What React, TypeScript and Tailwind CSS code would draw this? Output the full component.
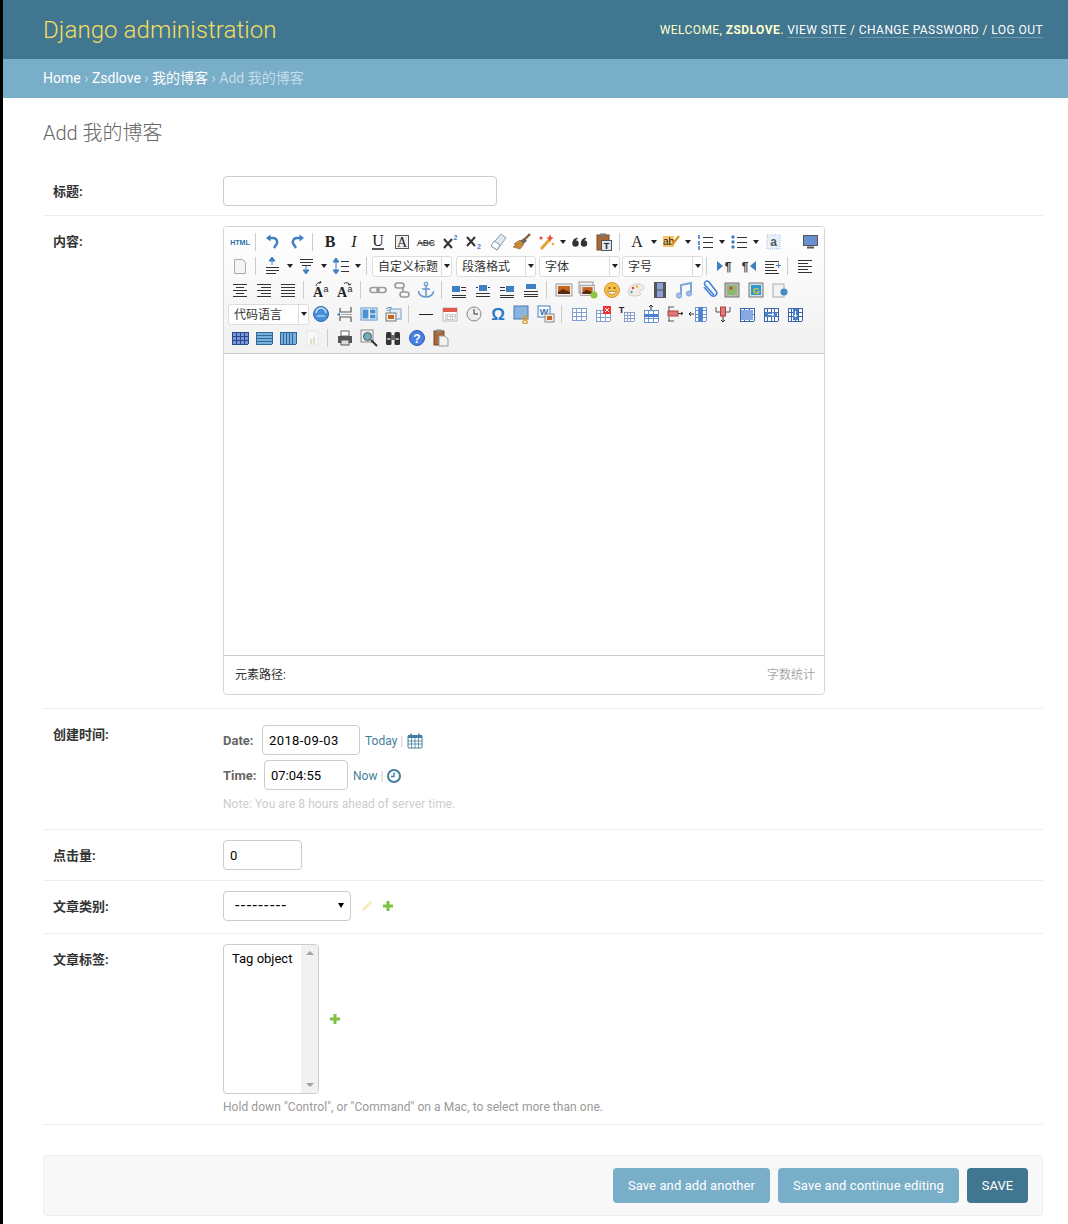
import React from "react";

const B = "#3f7fc4";
const D = "#333";

const Grid = ({ c = "#6f94c8", x = 3, y = 4, w = 14, h = 12, cols = 3, rows = 3, bg = "#fff" }: any) => {
  const l = [];
  for (let i = 0; i <= cols; i++) l.push(<path key={"c" + i} d={`M${x + (w * i) / cols} ${y}v${h}`} stroke={c} />);
  for (let i = 0; i <= rows; i++) l.push(<path key={"r" + i} d={`M${x} ${y + (h * i) / rows}h${w}`} stroke={c} />);
  return (
    <g shapeRendering="crispEdges">
      <rect x={x} y={y} width={w} height={h} fill={bg} />
      {l}
    </g>
  );
};

const Lines = ({ rows }: { rows: number[][] }) => (
  <g shapeRendering="crispEdges">
    {rows.map((r, i) => (
      <path key={i} d={`M${r[0]} ${r[2]}H${r[1]}`} stroke={D} strokeWidth="1" />
    ))}
  </g>
);

const T = ({ x = 10, y = 15, s = 15, f = "'Liberation Serif',serif", w = "700", c = "#222", st = "normal", children }: any) => (
  <text x={x} y={y} textAnchor="middle" fontFamily={f} fontSize={s} fontWeight={w} fill={c} fontStyle={st}>
    {children}
  </text>
);

const layout = (a: number) => (
  <>
    <Lines rows={[[3, 17, 15], [3, 17, 17]]} />
    <rect x={a} y="6" width="8" height="6" fill={B} />
    {a === 3 && <Lines rows={[[12, 17, 7], [12, 17, 10]]} />}
    {a === 9 && <Lines rows={[[3, 8, 7], [3, 8, 10]]} />}
  </>
);

const picture = (
  <>
    <rect x="2" y="4" width="16" height="12" fill="#eee" stroke="#999" />
    <rect x="4" y="6" width="12" height="8" fill="#c8641e" />
    <path d="M4 12l5-3 7 3v2H4z" fill="#5a2a10" />
  </>
);

const icons: Record<string, React.ReactNode> = {
  html: <T s={7} y={13} f="'Liberation Sans',sans-serif" c="#2e6da4">HTML</T>,
  undo: (
    <>
      <path d="M7 6h3a4 4 0 0 1 3 6.800L11 16" fill="none" stroke={B} strokeWidth="2.400" />
      <path d="M3 6l4.500-3.500v7z" fill={B} />
    </>
  ),
  redo: (
    <>
      <path d="M13 6h-3a4 4 0 0 0-3 6.800L9 16" fill="none" stroke={B} strokeWidth="2.400" />
      <path d="M17 6l-4.500-3.500v7z" fill={B} />
    </>
  ),
  bold: <T s={16}>B</T>,
  italic: <T s={16} st="italic" w="400">I</T>,
  under: (
    <>
      <T y={14} s={16} w="400">U</T>
      <path d="M4 17h12" stroke="#222" strokeWidth="1.400" />
    </>
  ),
  boxa: (
    <>
      <rect x="3.500" y="3.500" width="13" height="13" fill="#eee" stroke="#555" />
      <T y={15} s={14} w="400">A</T>
    </>
  ),
  strike: (
    <>
      <T s={9} y={14} w="400" f="'Liberation Sans',sans-serif">ABC</T>
      <path d="M2 11h16" stroke="#222" />
    </>
  ),
  sup: (
    <>
      <path d="M4 7l8 9M12 7l-8 9" stroke={D} strokeWidth="2" />
      <T x={15.500} y={8} s={7} f="'Liberation Sans',sans-serif" c={B}>2</T>
    </>
  ),
  sub: (
    <>
      <path d="M3 5l8 9M11 5l-8 9" stroke={D} strokeWidth="2" />
      <T x={15} y={17} s={7} f="'Liberation Sans',sans-serif" c={B}>2</T>
    </>
  ),
  eraser: (
    <>
      <path d="M13 2l5 4-9 12-6-4z" fill="#dfe7f0" stroke="#8a9bb0" />
      <path d="M6 9l6 4-3 5-6-4z" fill="#fff" stroke="#8a9bb0" />
    </>
  ),
  brush: (
    <>
      <path d="M18 2l-6 6" stroke="#8a5a2b" strokeWidth="2.400" />
      <path d="M12 6l3 3-4 3-3-3z" fill="#666" />
      <path d="M8 8l4 4-4 5-7-2 3-2-2-1z" fill="#c48a3a" stroke="#8a5a2b" strokeWidth=".6" />
    </>
  ),
  wand: (
    <>
      <path d="M15 6L5 17" stroke="#e3a63a" strokeWidth="3" />
      <path d="M14 2l1 3 3 1-3 1-1 3-1-3-3-1 3-1z" fill="#e34a3a" />
      <circle cx="5" cy="6" r="1.600" fill="#e34a3a" />
      <circle cx="17" cy="12" r="1.200" fill="#f0a030" />
    </>
  ),
  quote: (
    <>
      <circle cx="5.500" cy="11.500" r="3.200" fill="#333" />
      <path d="M2.500 11c0-3 2-5 5-5.500v1.500c-1.500.5-2.300 2-2 4z" fill="#333" />
      <circle cx="14" cy="11.500" r="3.200" fill="#333" />
      <path d="M11 11c0-3 2-5 5-5.500v1.500c-1.500.5-2.300 2-2 4z" fill="#333" />
    </>
  ),
  paste: (
    <>
      <rect x="3" y="3" width="12" height="15" fill="#a8683a" stroke="#7a4a26" />
      <rect x="6" y="1.500" width="6" height="3" fill="#777" />
      <rect x="7.500" y="8.500" width="10" height="10" fill="#dfe8f2" stroke="#555" />
      <T x={12.500} y={17} s={9} f="'Liberation Sans',sans-serif">T</T>
    </>
  ),
  fontA: <T s={16} y={15} w="400">A</T>,
  hilite: (
    <>
      <rect x="2" y="4" width="11" height="11" fill="#f8c66a" />
      <T x={7.500} y={13} s={10} f="'Liberation Sans',sans-serif" w="400">ab</T>
      <path d="M18 4l-7 9" stroke="#d9982a" strokeWidth="2.400" />
    </>
  ),
  ol: (
    <>
      <path d="M4 3v4M4 9v4M4 14v4" stroke={B} strokeWidth="1.600" />
      <Lines rows={[[8, 18, 5], [8, 18, 10], [8, 18, 15]]} />
    </>
  ),
  ul: (
    <>
      <circle cx="4" cy="5" r="1.700" fill={B} />
      <circle cx="4" cy="10" r="1.700" fill={B} />
      <circle cx="4" cy="15" r="1.700" fill={B} />
      <Lines rows={[[8, 18, 5], [8, 18, 10], [8, 18, 15]]} />
    </>
  ),
  anchorA: (
    <>
      <rect x="4" y="3" width="13" height="14" fill="#e8f0fa" stroke="#a8c4e8" strokeDasharray="1 1" />
      <T x={10.500} y={14} s={12} f="'Liberation Sans',sans-serif" c="#555">a</T>
    </>
  ),
  monitor: (
    <>
      <rect x="3.500" y="3.500" width="14" height="10" fill="#6a8fd0" stroke="#555" />
      <path d="M7 15.500h7" stroke="#555" strokeWidth="2" />
    </>
  ),
  doc: <path d="M4.500 3.500h8l3 3v11h-11z" fill="#f4f4f4" stroke="#aab" />,
  rowUp: (
    <>
      <path d="M9 1l3 4H6zM9 4v5" fill={B} stroke={B} />
      <Lines rows={[[3, 16, 11], [3, 16, 14], [3, 13, 17]]} />
    </>
  ),
  rowDown: (
    <>
      <Lines rows={[[3, 16, 3], [3, 16, 6], [5, 14, 9]]} />
      <path d="M9 18l3-4H6zM9 10v5" fill={B} stroke={B} />
    </>
  ),
  lineH: (
    <>
      <path d="M5 2l3 4H2zM5 18l3-4H2zM5 5v10" fill={B} stroke={B} />
      <Lines rows={[[10, 18, 5], [10, 18, 10], [10, 18, 15]]} />
    </>
  ),
  select: null,
  ltr: (
    <>
      <path d="M3 5l6 5-6 5z" fill={B} />
      <T x={14} y={15} s={12} f="'Liberation Sans',sans-serif" c="#333">¶</T>
    </>
  ),
  rtl: (
    <>
      <T x={7} y={15} s={12} f="'Liberation Sans',sans-serif" c="#333">¶</T>
      <path d="M18 5l-6 5 6 5z" fill={B} />
    </>
  ),
  indent: (
    <>
      <Lines rows={[[3, 17, 5], [3, 12, 8], [3, 12, 11], [3, 15, 14], [3, 17, 17]]} />
      <path d="M14 9.500h5M16.500 7v5" stroke={B} />
    </>
  ),
  jl: <Lines rows={[[3, 17, 4], [3, 13, 7], [3, 17, 10], [3, 13, 13], [3, 17, 16]]} />,
  jc: <Lines rows={[[3, 17, 4], [6, 14, 7], [3, 17, 10], [6, 14, 13], [3, 17, 16]]} />,
  jr: <Lines rows={[[3, 17, 4], [7, 17, 7], [3, 17, 10], [7, 17, 13], [3, 17, 16]]} />,
  jj: <Lines rows={[[3, 17, 4], [3, 17, 7], [3, 17, 10], [3, 17, 13], [3, 17, 16]]} />,
  capUp: (
    <>
      <T x={7} y={17} s={14} w="700">A</T>
      <T x={15} y={12} s={9} w="400" f="'Liberation Sans',sans-serif">a</T>
      <path d="M5 6a4 4 0 0 1 5-3.500l-1-1.500M10 2.500l-2 1" fill="none" stroke={D} />
    </>
  ),
  capDown: (
    <>
      <T x={7} y={17} s={14} w="700">A</T>
      <T x={15} y={12} s={9} w="400" f="'Liberation Sans',sans-serif">a</T>
      <path d="M9 3.500a4 4 0 0 1 6 1.500l1-1.500M15 5l-2-.5" fill="none" stroke={D} />
    </>
  ),
  link: (
    <>
      <rect x="2" y="7.500" width="9" height="5" rx="2.500" fill="none" stroke="#999" strokeWidth="1.600" />
      <rect x="9" y="7.500" width="9" height="5" rx="2.500" fill="none" stroke="#999" strokeWidth="1.600" />
    </>
  ),
  unlink: (
    <>
      <rect x="3" y="3" width="9" height="5" rx="2.500" fill="none" stroke="#999" strokeWidth="1.600" />
      <rect x="8" y="12" width="9" height="5" rx="2.500" fill="none" stroke="#999" strokeWidth="1.600" />
      <path d="M11 8v4" stroke="#999" strokeWidth="1.600" />
    </>
  ),
  anchor: (
    <>
      <circle cx="10" cy="4" r="1.700" fill="none" stroke="#6a9ad0" strokeWidth="1.300" />
      <path d="M10 6v11M6 9h8M2.500 11c0 4 4 6 7.500 6s7.500-2 7.500-6" fill="none" stroke="#6a9ad0" strokeWidth="1.600" />
    </>
  ),
  lay1: layout(3),
  lay2: (
    <>
      <rect x="6" y="5" width="8" height="6" fill={B} />
      <Lines rows={[[3, 5, 7], [15, 17, 7], [3, 17, 13], [3, 17, 16]]} />
    </>
  ),
  lay3: layout(9),
  lay4: (
    <>
      <rect x="5" y="4" width="10" height="5" fill={B} />
      <Lines rows={[[3, 17, 11], [3, 17, 14], [3, 17, 16]]} />
    </>
  ),
  img: picture,
  imgs: (
    <>
      <rect x="1" y="2" width="14" height="11" fill="#eee" stroke="#999" />
      <g transform="translate(1 2) scale(.85)">{picture}</g>
      <circle cx="16" cy="15" r="3.500" fill="#8cc63f" />
    </>
  ),
  emoji: (
    <>
      <circle cx="10" cy="10" r="7.500" fill="#f5c04a" stroke="#d9952a" />
      <circle cx="7.500" cy="8" r="1" fill="#7a4a10" />
      <circle cx="12.500" cy="8" r="1" fill="#7a4a10" />
      <path d="M5.500 11.500c1.500 3.500 7.500 3.500 9 0z" fill="#fff" stroke="#a05a10" strokeWidth=".6" />
    </>
  ),
  palette: (
    <>
      <path d="M2 12c0-5 6-9 12-8 5 1 5 5 2 6-3 0-3 3-1 4-2 3-13 3-13-2z" fill="#f0eee6" stroke="#ccc" />
      <circle cx="7" cy="8" r="1.200" fill="#e35" />
      <circle cx="11" cy="6.500" r="1.200" fill="#e3b030" />
      <circle cx="5.500" cy="12" r="1.200" fill="#5a9ad0" />
    </>
  ),
  film: (
    <>
      <rect x="4" y="2" width="12" height="16" fill="#555" />
      <rect x="7" y="3" width="6" height="6.500" fill="#8aa0d8" />
      <rect x="7" y="10.500" width="6" height="6.500" fill="#8aa0d8" />
    </>
  ),
  music: (
    <>
      <path d="M7 15V5l10-2v10" fill="none" stroke="#7ba6d8" strokeWidth="2" />
      <circle cx="5" cy="15.500" r="2.600" fill="#9cc0e8" stroke="#7ba6d8" />
      <circle cx="15" cy="13.500" r="2.600" fill="#9cc0e8" stroke="#7ba6d8" />
    </>
  ),
  clip: <path d="M16 15L7 5a2.400 2.400 0 0 1 4-3l7 9a3 3 0 0 1-5 4L6 7" fill="none" stroke="#3f7fd4" strokeWidth="1.500" />,
  map: (
    <>
      <rect x="3" y="3" width="14" height="14" fill="#bbb" stroke="#777" />
      <rect x="5" y="5" width="10" height="10" fill="#8cb870" />
      <circle cx="9" cy="8" r="1.600" fill="#d33" />
    </>
  ),
  gmap: (
    <>
      <rect x="3" y="3" width="14" height="14" fill="#ddd" stroke="#777" />
      <rect x="5" y="5" width="10" height="10" fill="#2a9ad0" />
      <T y={14} s={9} f="'Liberation Sans',sans-serif" c="#e3c030">G</T>
    </>
  ),
  iframe: (
    <>
      <rect x="3" y="4" width="11" height="13" fill="#f2f2f2" stroke="#aaa" />
      <circle cx="14" cy="12" r="3.600" fill="#4a8ac0" />
    </>
  ),
  lang: (
    <>
      <circle cx="10" cy="10" r="7.500" fill="#4a90d9" stroke="#2a6ab0" />
      <path d="M5 9a5 5 0 0 1 10 0" fill="none" stroke="#cfe4fa" strokeWidth="1.400" />
      <path d="M6 12h8" stroke="#cfe4fa" />
    </>
  ),
  pagebreak: (
    <>
      <path d="M5 4v4h11V3M5 17v-4h11v5" fill="none" stroke="#555" strokeWidth="1.200" />
      <path d="M2 10.500l3-2v4z" fill={B} />
      <path d="M6 10.500h11" stroke="#aaa" />
    </>
  ),
  template: (
    <>
      <rect x="2" y="4" width="16" height="12" fill="#fff" stroke="#5a8fc4" />
      <rect x="3.500" y="5.500" width="6" height="9" fill="#4a90d0" />
      <rect x="11" y="5.500" width="5.500" height="4" fill="#4a90d0" />
      <rect x="11" y="10.500" width="5.500" height="4" fill="#4a90d0" />
    </>
  ),
  bg: (
    <>
      <rect x="7" y="5" width="11" height="10" fill="#e2ecf8" stroke="#7a9cc8" />
      <rect x="3" y="9" width="10" height="8" fill="#eee" stroke="#777" />
      <rect x="5" y="11" width="6" height="4" fill="#c8641e" />
      <path d="M3 5a5 5 0 0 1 6-1M4 7a3 3 0 0 1 3-1" fill="none" stroke="#4a8ac0" />
    </>
  ),
  hr: <path d="M3 10.500h14" stroke="#222" strokeWidth="1" />,
  date: (
    <>
      <rect x="3" y="4" width="14" height="13" fill="#fff" stroke="#bbb" />
      <rect x="3" y="4" width="14" height="4" fill="#e25a4a" />
      <Grid c="#ccc" x={5} y={10} w={10} h={5} cols={4} rows={2} />
    </>
  ),
  time: (
    <>
      <circle cx="10" cy="10" r="7" fill="#eee" stroke="#888" />
      <path d="M10 5v5h4" fill="none" stroke="#333" />
    </>
  ),
  omega: <T s={17} y={16} w="700" c="#2e78c8" f="'Liberation Sans',sans-serif">Ω</T>,
  wiki: (
    <>
      <rect x="2" y="2" width="14" height="13" fill="#8ab4e0" stroke="#4a7ab0" />
      <path d="M13 12a2 2 0 1 0 .1 0M13 16a2 2 0 1 0 .1 0" fill="none" stroke="#d9a030" strokeWidth="1.600" />
    </>
  ),
  word: (
    <>
      <rect x="2" y="2" width="12" height="11" fill="#fff" stroke="#3f7fc4" />
      <T x={8} y={11} s={9} c="#2e6ab0" f="'Liberation Sans',sans-serif">W</T>
      <rect x="9" y="10" width="9" height="8" fill="#eee" stroke="#888" />
      <rect x="11" y="12" width="5" height="4" fill="#c8641e" />
    </>
  ),
  table: <Grid c="#7f9fd0" />,
  tableDel: (
    <>
      <Grid c="#7f9fd0" y={6} h={11} />
      <rect x="10" y="2" width="8" height="8" fill="#e33" />
      <path d="M12 4l4 4M16 4l-4 4" stroke="#fff" />
    </>
  ),
  titleCol: (
    <>
      <T x={4.500} y={9} s={9} f="'Liberation Sans',sans-serif" c="#222">T</T>
      <Grid c="#8aa0c8" x={7} y={8} w={10} h={9} />
    </>
  ),
  rowIns: (
    <>
      <Grid c="#6a94d0" y={6} h={12} />
      <rect x="3" y="10" width="14" height="3" fill="#4a80d0" />
      <path d="M10 1v5M8 3l2-2 2 2" fill="none" stroke="#333" />
    </>
  ),
  colDel: (
    <>
      <path d="M3 3h6M3 17h6M4 3v4M4 13v4" stroke="#555" fill="none" />
      <rect x="3" y="7" width="10" height="5" fill="#e07878" stroke="#b04040" />
      <path d="M13 9.500h5M16 8l2 1.500-2 1.500" fill="none" stroke="#333" />
    </>
  ),
  colIns: (
    <>
      <Grid c="#6a94d0" x={6} y={3} w={11} h={14} cols={3} rows={4} />
      <rect x="10" y="3" width="3.500" height="14" fill="#4a80d0" />
      <path d="M0 10h5M2 8l-2 2 2 2" fill="none" stroke="#333" />
    </>
  ),
  rowDel: (
    <>
      <path d="M3 3v5h14V3" stroke="#555" fill="none" />
      <rect x="7.500" y="3" width="5" height="9" fill="#e07878" stroke="#b04040" />
      <path d="M10 12v6M8 16l2 2 2-2" fill="none" stroke="#333" />
    </>
  ),
  merge: (
    <>
      <Grid c="#3a64a8" cols={3} rows={2} y={4} h={13} />
      <rect x="4" y="6" width="12" height="10" fill="#8aa8e0" />
    </>
  ),
  mergeR: (
    <>
      <Grid c="#3a64a8" cols={4} rows={3} y={4} h={13} />
      <rect x="4" y="8" width="12" height="5" fill="#4a80c8" />
      <path d="M7 10.500h6M11 9l2 1.500-2 1.500" fill="none" stroke="#fff" />
    </>
  ),
  mergeD: (
    <>
      <Grid c="#3a64a8" cols={4} rows={3} y={4} h={13} />
      <rect x="8" y="5" width="5" height="11" fill="#4a80c8" />
      <path d="M10.500 7v6M9 11l1.500 2 1.500-2" fill="none" stroke="#fff" />
    </>
  ),
  t1: <Grid c="#2a4a90" cols={4} rows={3} bg="#7a96d8" x={2} w={16} h={12} />,
  t2: <Grid c="#2a6aa0" cols={1} rows={4} bg="#7ab0d8" x={2} w={16} h={12} />,
  t3: <Grid c="#2a64a0" cols={5} rows={1} bg="#7ab0d8" x={2} w={16} h={12} />,
  chart: (
    <>
      <path d="M5 3h8l3 3v11H5z" fill="#f8f8f8" stroke="#e6e6e6" />
      <rect x="8" y="11" width="2" height="5" fill="#e6dcc0" />
      <rect x="11" y="9" width="2" height="7" fill="#d8e4c8" />
    </>
  ),
  print: (
    <>
      <rect x="6" y="3" width="8" height="5" fill="#fff" stroke="#666" />
      <rect x="3" y="8" width="14" height="7" fill="#555" />
      <rect x="6" y="12" width="8" height="5" fill="#ddd" stroke="#555" />
    </>
  ),
  preview: (
    <>
      <rect x="2" y="2" width="12" height="12" fill="#eee" stroke="#888" />
      <circle cx="8.500" cy="8.500" r="4" fill="#6ab0b8" stroke="#555" />
      <path d="M12 12l6 6" stroke="#333" strokeWidth="2" />
    </>
  ),
  find: (
    <>
      <rect x="3" y="4" width="5.500" height="13" rx="1.500" fill="#333" />
      <rect x="11.500" y="4" width="5.500" height="13" rx="1.500" fill="#333" />
      <rect x="8" y="7" width="4" height="5" fill="#666" />
      <rect x="4" y="10" width="3.500" height="2" fill="#aaa" />
      <rect x="12.500" y="10" width="3.500" height="2" fill="#aaa" />
    </>
  ),
  help: (
    <>
      <circle cx="10" cy="10" r="7.500" fill="#4a80e0" stroke="#2a5ab8" />
      <T y={14.500} s={12} c="#fff" f="'Liberation Sans',sans-serif">?</T>
    </>
  ),
  draft: (
    <>
      <rect x="3" y="3" width="10" height="14" fill="#a8683a" stroke="#7a4a26" />
      <rect x="5.500" y="1.500" width="5" height="3" fill="#888" />
      <path d="M8 8h6l3 3v7H8z" fill="#f2f2f2" stroke="#999" />
    </>
  ),
};

const Caret = () => (
  <span className="w-0 h-0 border-x-[3.5px] border-x-transparent border-t-[4px] border-t-[#222]" />
);

const Tool = ({ name }: { name: string }) => (
  <span className="flex w-[24px] h-[24px] items-center justify-center">
    <svg width="20" height="20" viewBox="0 0 20 20">
      {icons[name]}
    </svg>
  </span>
);

const Item = ({ item }: { item: string }) => {
  if (item === "|") {
    return (
      <span className="w-[9px] h-[24px] flex items-center pl-[3px]">
        <span className="w-px h-[18px] bg-[#ccc]" />
      </span>
    );
  }
  if (item === "_") return <span className="w-[13px]" />;
  if (item.startsWith("sel:")) {
    const [, label, w, ml] = item.split(":");
    return (
      <span
        className="flex h-[21px] border border-[#ddd] rounded-[3px] bg-white text-[12px] text-[#333]"
        style={{ width: Number(w), marginLeft: Number(ml) }}
      >
        <span className="flex-1 pl-[5px] leading-[20px] truncate">{label}</span>
        <span className="w-[10px] flex items-center justify-center border-l border-[#ddd]">
          <Caret />
        </span>
      </span>
    );
  }
  if (item.endsWith("+")) {
    return (
      <span className="flex w-[34px] items-center">
        <Tool name={item.slice(0, -1)} />
        <span className="w-[10px] flex justify-center">
          <Caret />
        </span>
      </span>
    );
  }
  return <Tool name={item} />;
};

const toolbar = [
  ["html", "|", "undo", "redo", "|", "bold", "italic", "under", "boxa", "strike", "sup", "sub", "eraser", "brush", "wand+", "quote", "paste", "|", "fontA+", "hilite+", "ol+", "ul+", "anchorA", "_", "monitor"],
  ["doc", "|", "rowUp+", "rowDown+", "lineH+", "|", "sel:自定义标题:80:0", "sel:段落格式:80:4", "sel:字体:81:3", "sel:字号:81:2", "|", "ltr", "rtl", "indent", "|", "jl"],
  ["jc", "jr", "jj", "|", "capUp", "capDown", "|", "link", "unlink", "anchor", "|", "lay1", "lay2", "lay3", "lay4", "|", "img", "imgs", "emoji", "palette", "film", "music", "clip", "map", "gmap", "iframe"],
  ["sel:代码语言:81:0", "lang", "pagebreak", "template", "bg", "|", "hr", "date", "time", "omega", "wiki", "word", "|", "table", "tableDel", "titleCol", "rowIns", "colDel", "colIns", "rowDel", "merge", "mergeR", "mergeD"],
  ["t1", "t2", "t3", "chart", "|", "print", "preview", "find", "help", "draft"],
];

const Row = ({ label, className, children }: { label: string; className: string; children: React.ReactNode }) => (
  <div className={`flex pl-[10px] border-b border-[#eee] ${className}`}>
    <label className="w-[170px] h-[30px] text-[13px] font-bold text-[#333] leading-[32px] shrink-0">{label}:</label>
    <div>{children}</div>
  </div>
);

const inputCls = "block h-[30px] border border-[#ccc] rounded-[4px] px-[6px] text-[13px] text-black bg-white";

const Plus = () => (
  <svg width="12" height="12" viewBox="0 0 12 12">
    <path d="M4.500 1h3v3.500h3.500v3H7.500V11h-3V7.500H1v-3h3.500z" fill="#7fc241" />
  </svg>
);

export default function App() {
  return (
    <div className="bg-black pl-[3px] min-h-[1224px] [font-family:Roboto,'Noto_Sans_CJK_SC',sans-serif]">
      <div className="bg-white h-[1224px] overflow-hidden">
        <header className="flex items-center justify-between h-[59px] bg-[#417690] pl-[40px] pr-[25px]">
          <h1 className="text-[24px] font-light text-[#f5dd5d] tracking-[0.1px]">Django administration</h1>
          <div className="text-[12px] tracking-[0.43px] uppercase text-[#ffc]">
            Welcome, <strong>zsdlove</strong>. <a className="text-white border-b border-[rgba(255,255,255,0.25)]">View site</a>
            {" / "}
            <a className="text-white border-b border-[rgba(255,255,255,0.25)]">Change password</a>
            {" / "}
            <a className="text-white border-b border-[rgba(255,255,255,0.25)]">Log out</a>
          </div>
        </header>
        <div className="h-[39px] bg-[#79aec8] pl-[40px] flex items-center text-[14px] text-[#c4dce8]">
          <a className="text-white">Home</a>
          <span className="mx-[3.5px]">›</span>
          <a className="text-white">Zsdlove</a>
          <span className="mx-[3.5px]">›</span>
          <a className="text-white">我的博客</a>
          <span className="mx-[3.5px]">›</span>
          <span>Add 我的博客</span>
        </div>
        <main className="pl-[40px] pr-[25px] pt-[21px]">
          <h2 className="text-[20px] font-light text-[#666] leading-[28px] mb-[19px]">Add 我的博客</h2>

          <Row label="标题" className="pt-[10px] pb-[9px]">
            <input className={`${inputCls} w-[274px]`} />
          </Row>

          <Row label="内容" className="pt-[10px] pb-[13px]">
            <div className="w-[602px] border border-[#d4d4d4] rounded-[4px] overflow-hidden">
              <div className="h-[127px] pt-[3px] pl-[4px] bg-gradient-to-b from-white to-[#f1f1f1] border-b border-[#ccc] shadow-[0_2px_4px_rgba(0,0,0,0.15)]">
                {toolbar.map((items, i) => (
                  <div key={i} className="flex h-[24px] items-center">
                    {items.map((item, j) => (
                      <Item key={j} item={item} />
                    ))}
                  </div>
                ))}
              </div>
              <div className="h-[301px] bg-white" />
              <div className="h-[39px] border-t border-[#ccc] flex items-center justify-between pl-[11px] pr-[9px] text-[12px]">
                <span className="text-[#333]">元素路径:</span>
                <span className="text-[#aaa]">字数统计</span>
              </div>
            </div>
          </Row>

          <Row label="创建时间" className="pt-[10px] pb-[17px]">
            <div className="pt-[6px]">
              <div className="flex items-center h-[30px] text-[12px]">
                <span className="w-[39px] pt-[2px] text-[13px] font-bold text-[#666]">Date:</span>
                <input className={`${inputCls} w-[98px] tracking-[0.4px]`} defaultValue="2018-09-03" />
                <a className="ml-[5px] pt-[2px] text-[#447e9b]">Today</a>
                <span className="ml-[3px] pt-[2px] text-[#ccc]">|</span>
                <svg className="ml-[4px] mt-[2px]" width="16" height="16" viewBox="0 0 16 16">
                  <rect x="1" y="2.500" width="14" height="12.500" rx="1" fill="#fff" stroke="#447e9b" />
                  <rect x="1" y="2" width="14" height="3" fill="#447e9b" />
                  <path d="M4 .5v3M12 .5v3" stroke="#447e9b" strokeWidth="1.600" />
                  <path d="M1 8h14M1 11h14M4.500 5v10M8 5v10M11.500 5v10" stroke="#447e9b" strokeWidth=".8" />
                </svg>
              </div>
              <div className="flex items-center h-[30px] mt-[5px] text-[12px]">
                <span className="w-[41px] pt-[2px] text-[13px] font-bold text-[#666]">Time:</span>
                <input className={`${inputCls} w-[84px]`} defaultValue="07:04:55" />
                <a className="ml-[5px] pt-[2px] text-[#447e9b]">Now</a>
                <span className="ml-[3px] pt-[2px] text-[#ccc]">|</span>
                <svg className="ml-[3px] mt-[2px]" width="16" height="16" viewBox="0 0 16 16">
                  <circle cx="8" cy="8" r="6" fill="#fff" stroke="#447e9b" strokeWidth="2" />
                  <path d="M8 4.500V8.500H5" fill="none" stroke="#447e9b" strokeWidth="1.400" />
                </svg>
              </div>
              <p className="text-[12px] tracking-[0.05px] leading-[16px] text-[#ccc] mt-[6px]">Note: You are 8 hours ahead of server time.</p>
            </div>
          </Row>

          <Row label="点击量" className="pt-[10px] pb-[10px]">
            <input className={`${inputCls} w-[79px]`} defaultValue="0" />
          </Row>

          <Row label="文章类别" className="pt-[10px] pb-[12px]">
            <div className="flex items-center">
              <div className="relative">
                <select className="block appearance-none h-[30px] w-[128px] border border-[#ccc] rounded-[4px] pl-[11px] text-[16px] tracking-[1.4px] bg-white text-black">
                  <option>---------</option>
                </select>
                <span className="absolute right-[7px] top-[12px] w-0 h-0 border-x-[3.5px] border-x-transparent border-t-[5px] border-t-black pointer-events-none" />
              </div>
              <svg className="ml-[10px]" width="12" height="12" viewBox="0 0 12 12">
                <path d="M9 1l2 2-7 7-3 1 1-3z" fill="#efb80b" opacity=".3" />
              </svg>
              <span className="ml-[9px] flex">
                <Plus />
              </span>
            </div>
          </Row>

          <Row label="文章标签" className="pt-[10px] pb-[9px]">
            <div className="flex items-center">
              <div className="w-[96px] h-[150px] border border-[#ccc] rounded-[4px] flex overflow-hidden bg-white">
                <div className="flex-1 pl-[8px] pt-[6px] text-[13px] leading-[16px] text-black">Tag object</div>
                <div className="w-[17px] bg-[#f1f1f1] flex flex-col items-center justify-between py-[6px]">
                  <span className="w-0 h-0 border-x-[4px] border-x-transparent border-b-[4px] border-b-[#a3a3a3]" />
                  <span className="w-0 h-0 border-x-[4px] border-x-transparent border-t-[4px] border-t-[#a3a3a3]" />
                </div>
              </div>
              <span className="ml-[10px] flex">
                <Plus />
              </span>
            </div>
            <p className="text-[12px] tracking-[0.06px] leading-[16px] text-[#999] mt-[5px]">Hold down "Control", or "Command" on a Mac, to select more than one.</p>
          </Row>

          <div className="mt-[30px] h-[61px] border border-[#eee] rounded-[4px] bg-[#f8f8f8] flex items-center justify-end gap-[8px] pr-[14px]">
            <button className="h-[35px] w-[157px] rounded-[4px] bg-[#79aec8] text-white text-[13px] tracking-[0.1px]">Save and add another</button>
            <button className="h-[35px] w-[181px] rounded-[4px] bg-[#79aec8] text-white text-[13px] tracking-[0.1px]">Save and continue editing</button>
            <button className="h-[35px] w-[61px] rounded-[4px] bg-[#417690] text-white text-[13px]">SAVE</button>
          </div>
        </main>
      </div>
    </div>
  );
}
